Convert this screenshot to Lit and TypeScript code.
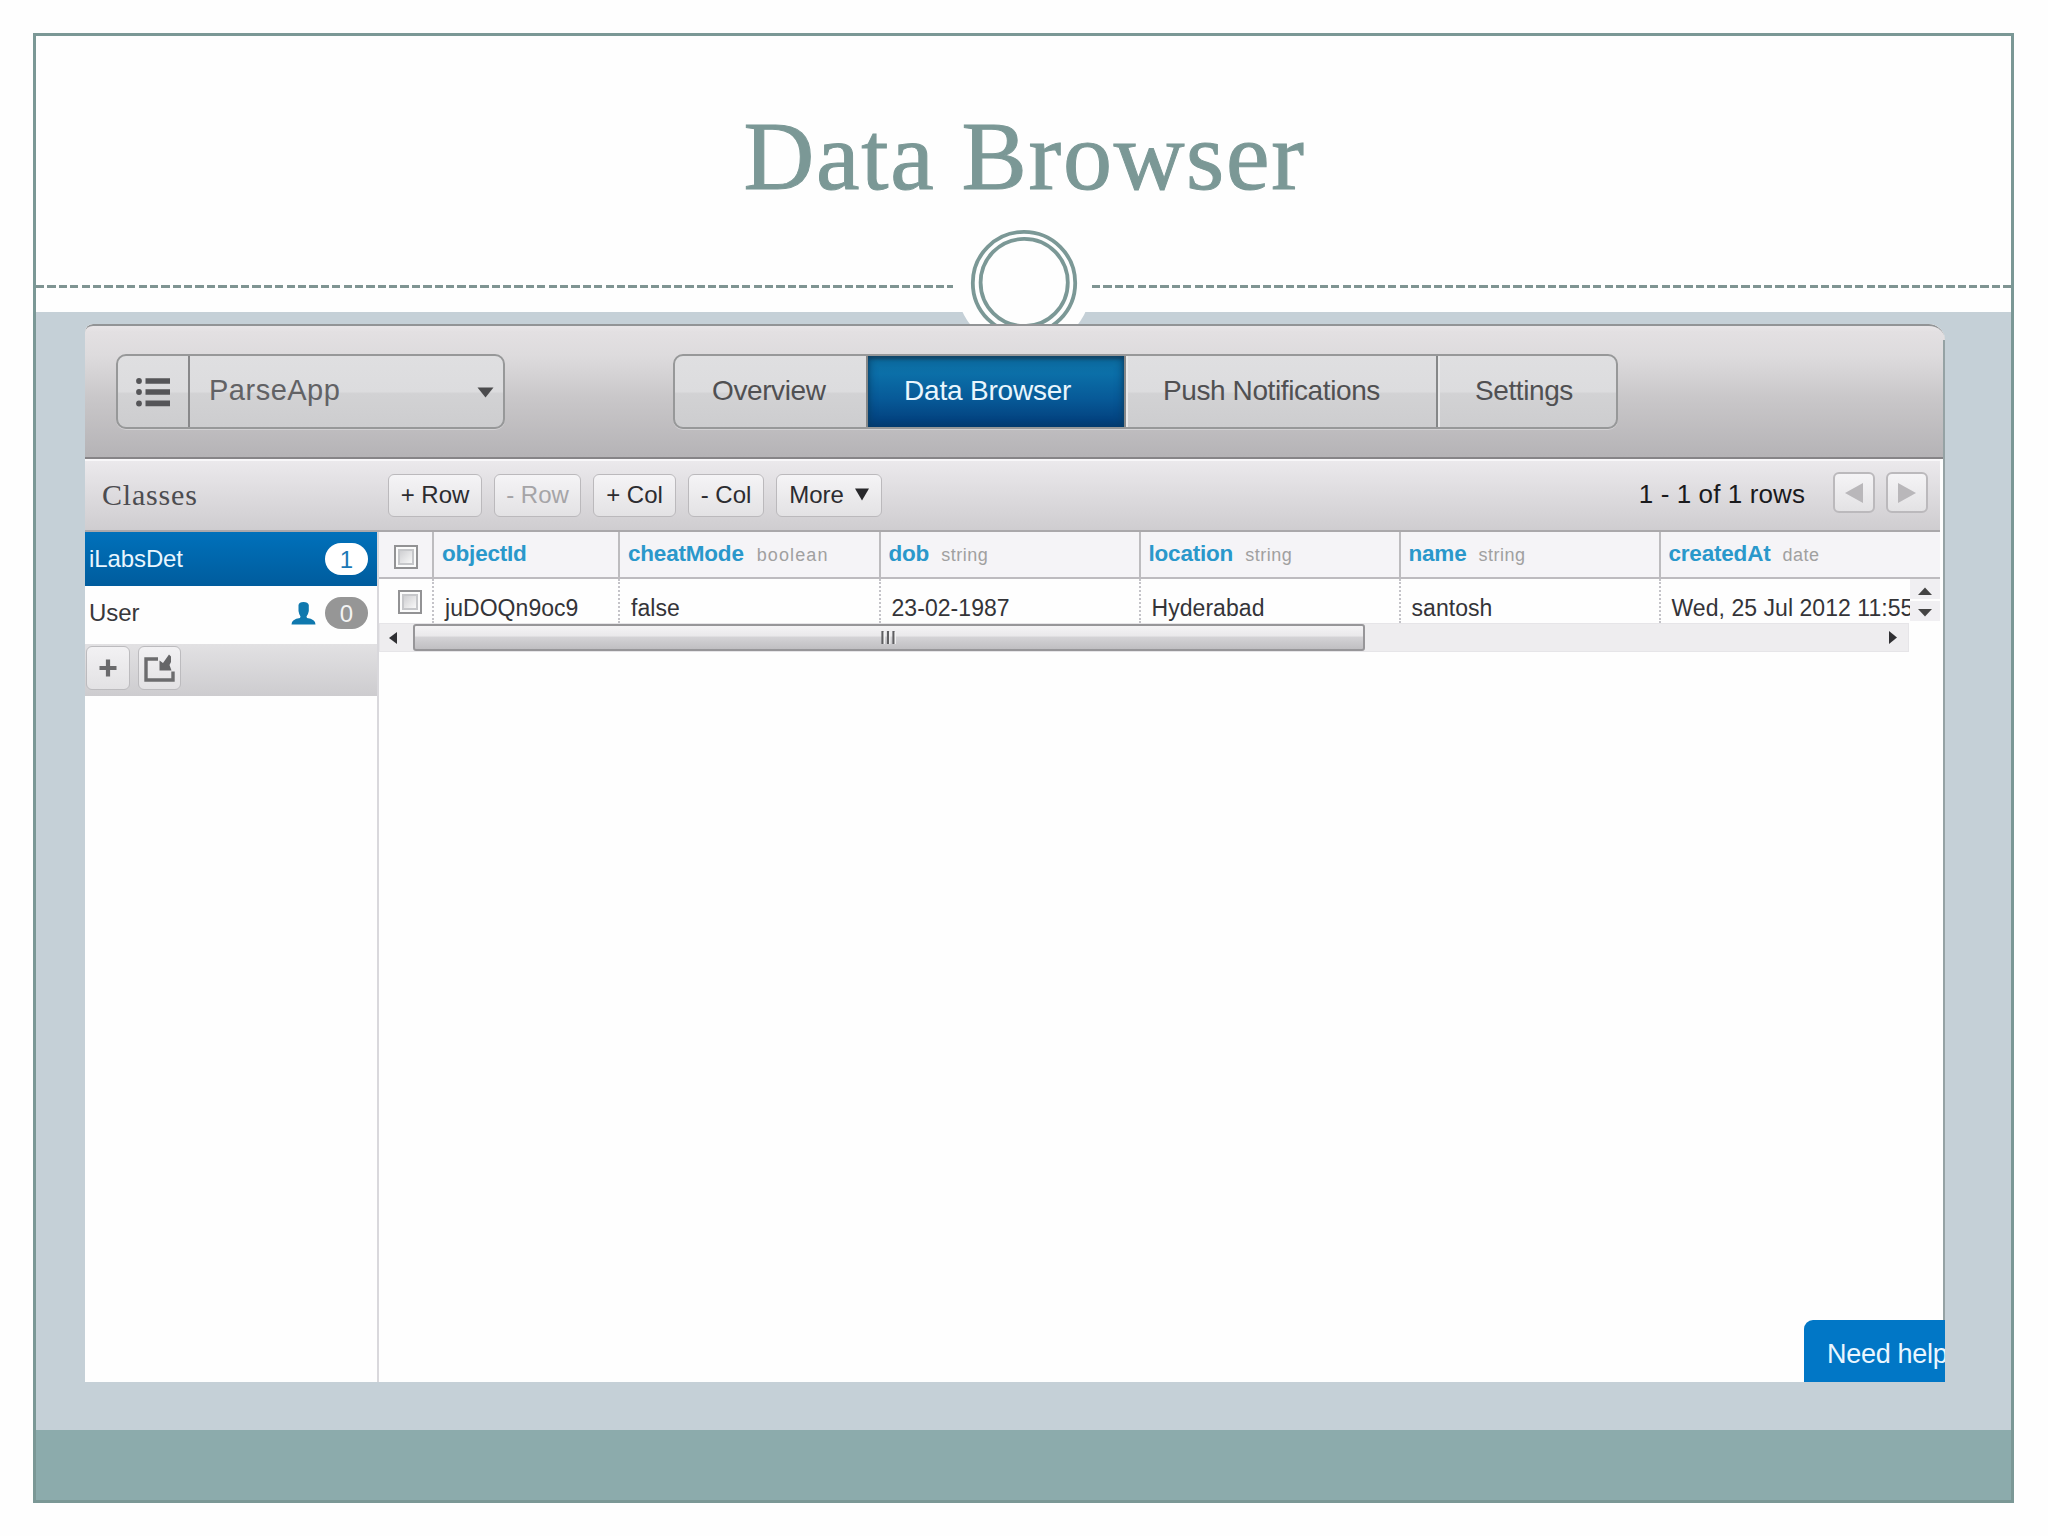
import { LitElement, html, css, svg } from "lit";
import { customElement } from "lit/decorators.js";
import { classMap } from "lit/directives/class-map.js";

interface Column {
  name: string;
  type: string;
  value: string;
}

const columns: Column[] = [
  { name: "objectId", type: "", value: "juDOQn9oc9" },
  { name: "cheatMode", type: "boolean", value: "false" },
  { name: "dob", type: "string", value: "23-02-1987" },
  { name: "location", type: "string", value: "Hyderabad" },
  { name: "name", type: "string", value: "santosh" },
  { name: "createdAt", type: "date", value: "Wed, 25 Jul 2012 11:55" },
];

@customElement("parse-header")
export class ParseHeader extends LitElement {
  static styles = css`
    :host {
      display: block;
      height: 135px;
      box-sizing: border-box;
      border-top: 2px solid #929496;
      border-bottom: 2px solid #868487;
      border-radius: 8px 16px 0 0;
      background: linear-gradient(#e8e5e7 0, #e3e0e2 6px, #dddbdd 30px, #c9c7c9 72px, #b5b3b6 100%);
      padding: 28px 0 0 31px;
      font-family: "Liberation Sans", Arial, sans-serif;
    }
    .line { display: flex; }
    .group {
      display: flex;
      box-sizing: border-box;
      height: 75px;
      border: 2px solid #979899;
      border-radius: 10px;
      background: linear-gradient(#dfdfe1 0, #dcdcde 50%, #d2d2d4 53%, #cdcdcf 100%);
      box-shadow: 0 1px 0 #d3d2d4;
      overflow: hidden;
    }
    .app { width: 389px; margin-right: 168px; color: #626265; }
    .menu {
      width: 70px;
      border-right: 2px solid #88888a;
      display: flex;
      align-items: center;
      justify-content: center;
    }
    .name {
      flex: 1;
      display: flex;
      align-items: center;
      justify-content: space-between;
      padding: 0 9px 0 19px;
      font-size: 29px;
      letter-spacing: 0.5px;
      line-height: 68px;
      padding-bottom: 3px;
    }
    .name svg { position: relative; top: 2px; }
    .tabs { width: 945px; }
    .tab {
      box-sizing: border-box;
      border-right: 2px solid #858788;
      line-height: 70px;
      font-size: 28px;
      letter-spacing: -0.4px;
      color: #505052;
      box-shadow: inset 2px 0 0 #e9e9ea;
      white-space: nowrap;
    }
    .overview { width: 193px; padding-left: 37px; box-shadow: none; }
    .data {
      width: 258px;
      padding-left: 36px;
      color: #e9f6fd;
      letter-spacing: -0.2px;
      background: linear-gradient(#0d6d9f 0, #0b6fa8 25%, #075a98 60%, #023c79 100%);
      box-shadow: inset 0 0 10px #063a63, inset 0 3px 3px #19506f;
    }
    .push { width: 312px; padding-left: 37px; }
    .settings { flex: 1; padding-left: 37px; border-right: 0; }
  `;

  render() {
    return html`<div class="line">
      <div class="group app">
        <div class="menu">
          <svg width="34" height="30" viewBox="0 0 34 30" fill="#555558">
            <circle cx="3" cy="4" r="2.9" /><circle cx="3" cy="15" r="2.9" /><circle cx="3" cy="26.500" r="2.900" />
            <path d="M9.500 1.300h24.500v5.400h-24.500zM9.500 12.300h24.500v5.400h-24.500zM9.500 23.500h24.500v5.800h-24.500z" />
          </svg>
        </div>
        <div class="name">
          <span>ParseApp</span>
          <svg width="17" height="11" viewBox="0 0 17 11"><path d="M.5.500h16L8.500 10.500z" fill="#4b4b4d" /></svg>
        </div>
      </div>
      <div class="group tabs">
        <div class="tab overview">Overview</div>
        <div class="tab data">Data Browser</div>
        <div class="tab push">Push Notifications</div>
        <div class="tab settings">Settings</div>
      </div>
    </div>`;
  }
}

@customElement("tool-bar")
export class ToolBar extends LitElement {
  static styles = css`
    :host {
      box-sizing: border-box;
      height: 73px;
      width: 1855px;
      border-top: 2px solid #f8f7f9;
      border-bottom: 2px solid #aaa8ab;
      background: linear-gradient(#ebe9ec, #dddbde 50%, #cfcdd0);
      display: flex;
      align-items: center;
      font: 24px "Liberation Sans", Arial, sans-serif;
      color: #2c2c30;
    }
    .title {
      width: 303px;
      box-sizing: border-box;
      padding: 0 0 2px 17px;
      font: 30px "Liberation Serif", "Times New Roman", serif;
      letter-spacing: 0.8px;
      color: #4c4c50;
    }
    .btn {
      box-sizing: border-box;
      height: 43px;
      border: 1.500px solid #bbb9bc;
      border-radius: 6px;
      background: linear-gradient(#f5f4f6, #e3e2e4);
      display: flex;
      align-items: center;
      justify-content: center;
      margin-right: 12px;
      padding-bottom: 2px;
      white-space: nowrap;
    }
    .w1 { width: 94px; }
    .w2 { width: 87px; color: #a5a4a7; }
    .w3 { width: 83px; }
    .w4 { width: 76px; }
    .w5 { width: 106px; gap: 11px; }
    .count { margin-left: auto; margin-right: 28px; padding-bottom: 2px; font-size: 26px; color: #1a1a1d; letter-spacing: 0.1px; }
    .page { width: 42px; height: 41px; margin-right: 11px; position: relative; top: -3px; border-width: 2px; padding: 0; }
    .page:last-child { margin-right: 12px; }
  `;

  render() {
    return html`
      <div class="title">Classes</div>
      <div class="btn w1">+ Row</div>
      <div class="btn w2">- Row</div>
      <div class="btn w3">+ Col</div>
      <div class="btn w4">- Col</div>
      <div class="btn w5">
        <span>More</span>
        <svg width="14" height="13" viewBox="0 0 14 13"><path d="M0 .500h14L7 12.500z" fill="#28282b" /></svg>
      </div>
      <div class="count">1 - 1 of 1 rows</div>
      <div class="btn page">
        <svg width="18" height="20" viewBox="0 0 18 20"><path d="M18 0v20L0 10z" fill="#b9b7ba" /></svg>
      </div>
      <div class="btn page">
        <svg width="18" height="20" viewBox="0 0 18 20"><path d="M0 0v20l18-10z" fill="#b9b7ba" /></svg>
      </div>
    `;
  }
}

@customElement("class-list")
export class ClassList extends LitElement {
  static styles = css`
    :host {
      display: block;
      width: 292px;
      border-right: 2px solid #d9d8dc;
      font: 24px "Liberation Sans", Arial, sans-serif;
      color: #38383c;
    }
    .row {
      height: 54px;
      box-sizing: border-box;
      padding: 0 9px 0 4px;
      display: flex;
      align-items: center;
    }
    .row.active { background: linear-gradient(#0071bb, #005c9d); color: #e9f6ff; }
    .label { flex: 1; letter-spacing: -0.1px; }
    .person { margin-right: 9px; }
    .badge {
      width: 43px;
      height: 32px;
      border-radius: 16px;
      line-height: 33px;
      text-align: center;
      background: #969696;
      color: #f3f3f3;
    }
    .active .badge { background: #fff; color: #1c78b5; }
    .tools {
      margin-top: 4px;
      height: 52px;
      box-sizing: border-box;
      padding: 2px 1px;
      display: flex;
      gap: 8px;
      background: linear-gradient(#e2e1e3, #cdcccf);
    }
    .btn {
      width: 43.500px;
      height: 44px;
      box-sizing: border-box;
      border: 1.500px solid #bcbbbe;
      border-radius: 6px;
      background: linear-gradient(#f2f1f3, #e3e2e4);
      display: flex;
      align-items: center;
      justify-content: center;
    }
  `;

  render() {
    const person = svg`<svg class="person" width="25" height="24" viewBox="0 0 25 24" fill="#0f78ae">
      <path d="M7.500 4Q8 1 12.500 1T17.800 4V10Q17.200 13.500 15.500 15.500L16 17Q24.500 18 24.500 23.500H.5Q.5 18 9 17L9.500 15.500Q8 13.500 7.500 10Z"/></svg>`;
    const rows = [
      { label: "iLabsDet", count: 1, active: true },
      { label: "User", count: 0, active: false },
    ];
    return html`
      ${rows.map(
        (r) => html`<div class=${classMap({ row: true, active: r.active })}>
          <span class="label">${r.label}</span>${r.active ? "" : person}
          <span class="badge">${r.count}</span>
        </div>`
      )}
      <div class="tools">
        <div class="btn">
          <svg width="18" height="18" viewBox="0 0 18 18"><path d="M9 .5v17M.5 9h17" stroke="#6a6a6c" stroke-width="4.200" /></svg>
        </div>
        <div class="btn">
          <svg width="32" height="30" viewBox="0 0 32 30" fill="none">
            <path d="M15 6H3v21h27V18.500" stroke="#6c6c6e" stroke-width="3.400" />
            <path d="M16.500 7.500L20 10l6-8.500 2 2V9L26.500 12l2 5.500H16.500Z" fill="#666668" />
          </svg>
        </div>
      </div>
    `;
  }
}

@customElement("data-grid")
export class DataGrid extends LitElement {
  static styles = css`
    :host {
      display: block;
      width: 1561px;
      font: 23px "Liberation Sans", Arial, sans-serif;
      color: #343438;
    }
    .cols { display: grid; grid-template-columns: 55px 186px 260.500px 260px 260px 260px 1fr; }
    .head { height: 47px; box-sizing: border-box; border-bottom: 2px solid #bdbbbf; background: #f5f4f7; }
    .head > div { border-right: 2px solid #bdbcbf; }
    .head > div:last-child, .body > div:last-child { border-right: 0; }
    .th {
      display: flex;
      align-items: baseline;
      gap: 12px;
      padding-left: 8px;
      line-height: 44px;
      font-size: 22.500px;
      font-weight: bold;
      letter-spacing: -0.2px;
      color: #2a98cb;
    }
    .type { font-size: 18px; font-weight: normal; letter-spacing: 0.5px; color: #a0a0a0; }
    .boolean { letter-spacing: 1.100px; margin-left: 1px; }
    .rows { display: flex; height: 44px; }
    .body { width: 1531px; height: 44px; overflow: hidden; }
    .body > div { border-right: 2px dotted #c4c3c8; }
    .td { padding: 14px 0 0 11px; height: 30px; line-height: 30px; white-space: nowrap; overflow: hidden; letter-spacing: 0.05px; }
    .pick { padding: 13px 0 0 15px; }
    .body .pick { padding: 11px 0 0 18.500px; }
    .box {
      width: 24px;
      height: 24px;
      box-sizing: border-box;
      border: 2px solid #929294;
      background: #fbfbfb;
      padding: 2px;
    }
    .fill {
      height: 12px;
      border: 2px solid #c6c7ca;
      background: linear-gradient(135deg, #cfcfd2, #f8f8f8);
    }
    .vbar { width: 30px; display: grid; grid-template-rows: 20px 20px; row-gap: 2px; }
    .step {
      background: #f0eff2;
      display: flex;
      align-items: center;
      justify-content: center;
    }
    .step svg { position: relative; top: 2px; }
    .hbar {
      width: 1530px;
      height: 29px;
      box-sizing: border-box;
      border: 1px solid #e6e5e8;
      background: #eeedef;
      display: flex;
      align-items: center;
      padding: 0 11px 0 9px;
    }
    .thumb {
      width: 952px;
      height: 27px;
      box-sizing: border-box;
      border: 2px solid #979699;
      border-radius: 3px;
      margin-left: 16px;
      margin-right: auto;
      background: linear-gradient(#f4f3f5 0, #eae9eb 42%, #d3d2d5 50%, #c0bfc2 100%);
      display: flex;
      align-items: center;
      justify-content: center;
    }
  `;

  render() {
    const box = html`<div class="box"><div class="fill"></div></div>`;
    return html`
      <div class="cols head">
        <div class="pick">${box}</div>
        ${columns.map(
          (c) => html`<div class="th">
            <span>${c.name}</span>${c.type
              ? html`<span class=${classMap({ type: true, boolean: c.type === "boolean" })}>${c.type}</span>`
              : ""}
          </div>`
        )}
      </div>
      <div class="rows">
        <div class="cols body">
          <div class="pick">${box}</div>
          ${columns.map((c) => html`<div class="td">${c.value}</div>`)}
        </div>
        <div class="vbar">
          <div class="step"><svg width="14" height="8" viewBox="0 0 14 8"><path d="M0 8L7 .5 14 8z" fill="#444" /></svg></div>
          <div class="step"><svg width="14" height="8" viewBox="0 0 14 8"><path d="M0 0L7 7.500 14 0z" fill="#444" /></svg></div>
        </div>
      </div>
      <div class="hbar">
        <svg width="8" height="12" viewBox="0 0 8 12"><path d="M8 0v12L0 6z" fill="#303033" /></svg>
        <div class="thumb">
          <svg width="16" height="13" viewBox="0 0 16 13">
            <path d="M1.500 0v13M7 0v13M12.500 0v13" stroke="#5f5f62" stroke-width="2.200" />
            <path d="M3.300 1v12M8.800 1v12M14.300 1v12" stroke="#f4f4f5" stroke-width="1.200" />
          </svg>
        </div>
        <svg width="8" height="13" viewBox="0 0 8 13"><path d="M0 0v13L8 6.500z" fill="#303033" /></svg>
      </div>
    `;
  }
}

@customElement("app-root")
export class AppRoot extends LitElement {
  static styles = css`
    :host {
      display: block;
      width: 2048px;
      height: 1536px;
      box-sizing: border-box;
      padding: 33px;
      background: #fefefe;
      overflow: hidden;
    }
    .slide {
      position: relative;
      width: 1981px;
      height: 1470px;
      box-sizing: border-box;
      border: 3px solid #7b9896;
      display: flex;
      flex-direction: column;
    }
    .top { height: 276px; display: flex; flex-direction: column; }
    h1 {
      margin: 0;
      padding: 64px 0 0 2px;
      height: 185px;
      box-sizing: content-box;
      text-align: center;
      font: normal 98px/112px "Liberation Serif", Georgia, serif;
      -webkit-text-stroke: 1px #7b9896;
      letter-spacing: 1.700px;
      color: #7b9896;
    }
    .rule { display: flex; justify-content: space-between; }
    .dash {
      height: 3px;
      width: 917px;
      background: repeating-linear-gradient(90deg, #7f9492 0 8.300px, transparent 8.300px 11.390px);
    }
    .dash.right { width: 919px; }
    .ring { position: absolute; left: 916px; top: 179px; }
    .stage { height: 1118px; box-sizing: border-box; padding: 12px 0 0 49px; background: #c5d0d7; }
    .panel {
      position: relative;
      width: 1860px;
      height: 1058px;
      display: flex;
      flex-direction: column;
      background: #fefefe;
      border-radius: 8px 16px 0 0;
      overflow: hidden;
    }
    .edge {
      position: absolute;
      right: 0;
      top: 16px;
      bottom: 0;
      width: 2px;
      background: #95a2a4;
    }
    .main { display: flex; flex: 1; }
    .help {
      position: absolute;
      right: 0;
      bottom: 0;
      width: 141px;
      height: 62px;
      box-sizing: border-box;
      padding: 3px 0 0 23px;
      border-radius: 9px 0 0 0;
      background: #0177c6;
      color: #e9f6ff;
      font: 27px/62px "Liberation Sans", Arial, sans-serif;
      white-space: nowrap;
      overflow: hidden;
      letter-spacing: -0.3px;
    }
    .foot { flex: 1; background: #8cabac; }
  `;

  render() {
    return html`<div class="slide">
      <div class="top">
        <h1>Data Browser</h1>
        <div class="rule"><div class="dash"></div><div class="dash right"></div></div>
      </div>
      <div class="stage">
        <svg class="ring" width="144" height="144" viewBox="952 215 144 144" fill="none">
          <circle cx="1024" cy="283" r="68" fill="#fefefe" />
          <circle cx="1024" cy="283" r="51.200" stroke="#7b9896" stroke-width="3.800" />
          <circle cx="1024.200" cy="282.500" r="43.600" stroke="#7b9896" stroke-width="3.800" />
        </svg>
        <div class="panel">
          <parse-header></parse-header>
          <tool-bar></tool-bar>
          <div class="main">
            <class-list></class-list>
            <data-grid></data-grid>
          </div>
          <div class="edge"></div>
          <div class="help">Need help</div>
        </div>
      </div>
      <div class="foot"></div>
    </div>`;
  }
}
